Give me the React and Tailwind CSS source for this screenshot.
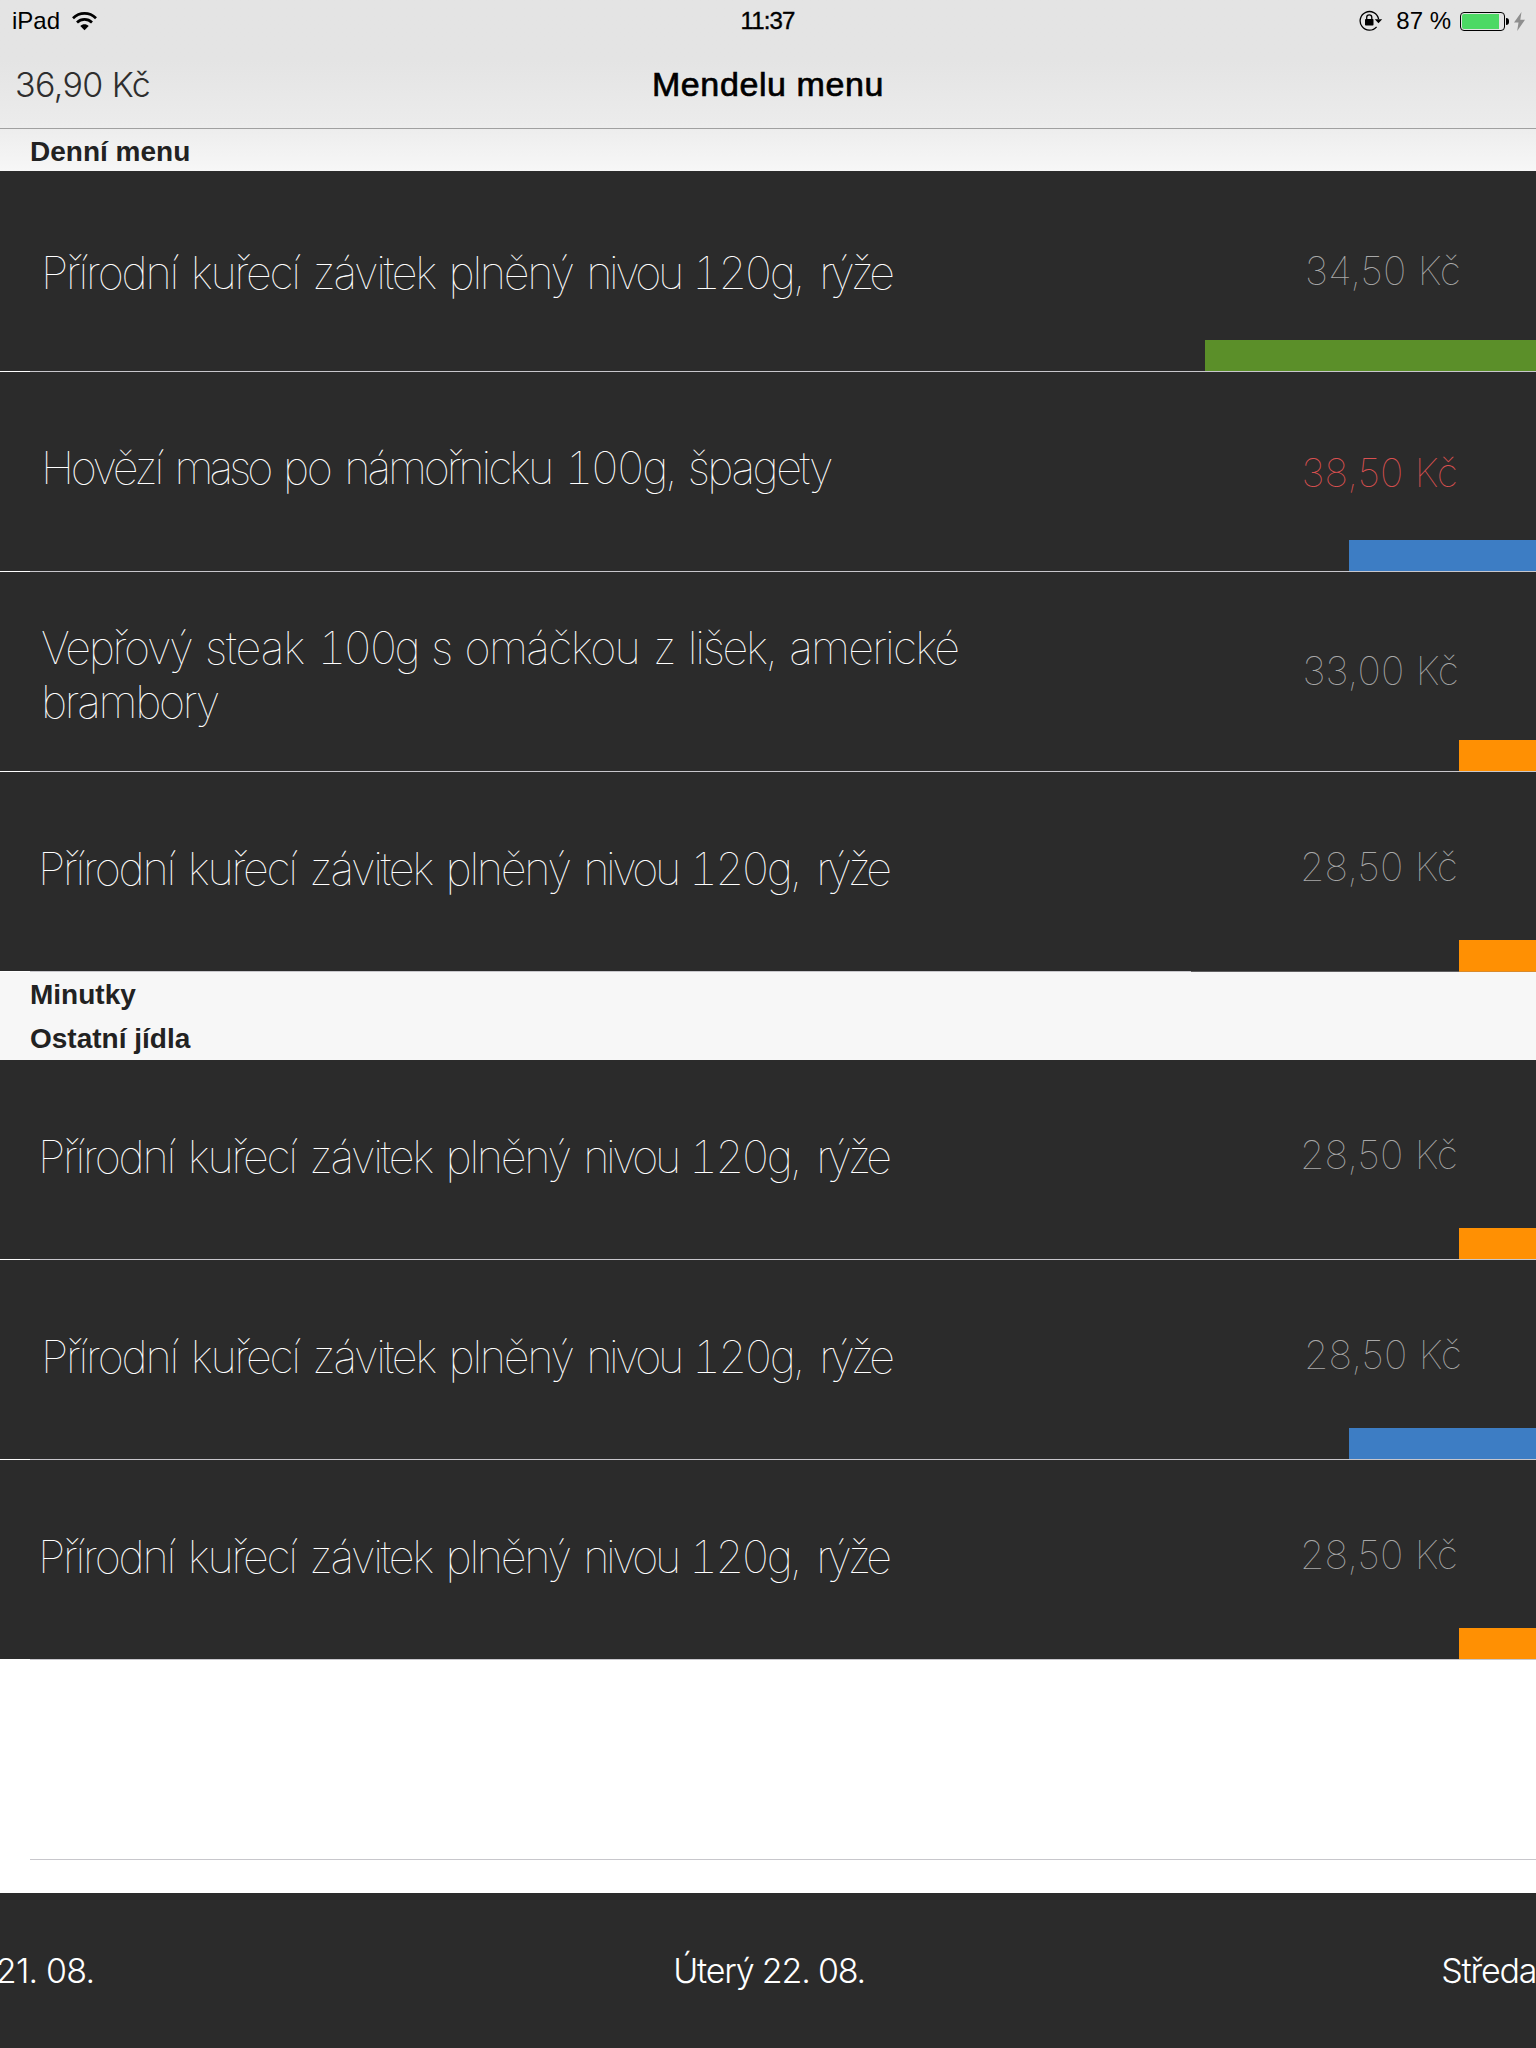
import React from "react";

const chicken = "Přírodní kuřecí závitek plněný nivou 120g, rýže";

const daily = [
  { name: chicken, price: "34,50 Kč", height: "h-[201px]", text: "pt-[75px] pl-[41px]", cost: "pt-[76px] pr-[75px] text-[#a8a8a8]", bar: "w-[331px] bg-[#5b8f29]" },
  { name: "Hovězí maso po námořnicku 100g, špagety", price: "38,50 Kč", text: "pt-[69px] pl-[41px]", cost: "pt-[77px] pr-[78px] text-[#d95050]", bar: "w-[187px] bg-[#3d7dc4]" },
  { name: "Vepřový steak 100g s omáčkou z lišek, americké brambory", price: "33,00 Kč", text: "pt-[49px] pl-[41px]", cost: "pt-[75px] pr-[77px] text-[#a8a8a8]", bar: "w-[77px] bg-[#ff9003]" },
  { name: chicken, price: "28,50 Kč", text: "pt-[70px] pl-[38px]", cost: "pt-[71px] pr-[78px] text-[#a8a8a8]", bar: "w-[77px] bg-[#ff9003]", partialLine: true },
];

const others = [
  { name: chicken, price: "28,50 Kč", text: "pt-[70px] pl-[38px]", cost: "pt-[71px] pr-[78px] text-[#a8a8a8]", bar: "w-[77px] bg-[#ff9003]" },
  { name: chicken, price: "28,50 Kč", text: "pt-[70px] pl-[41px]", cost: "pt-[71px] pr-[74px] text-[#a8a8a8]", bar: "w-[187px] bg-[#3d7dc4]" },
  { name: chicken, price: "28,50 Kč", text: "pt-[70px] pl-[38px]", cost: "pt-[71px] pr-[78px] text-[#a8a8a8]", bar: "w-[77px] bg-[#ff9003]" },
];

const tracking = {
  "Přírodní": "tracking-[-2.2px]",
  "nivou": "tracking-[-3.5px]",
  "rýže": "tracking-[-4.2px]",
  "Hovězí": "tracking-[-3.4px]",
  "maso": "tracking-[-4px]",
  "námořnicku": "tracking-[-3.1px]",
  "špagety": "tracking-[-2.5px]",
  "steak": "tracking-[-1.1px]",
  "omáčkou": "tracking-[-1.6px]",
  "americké": "tracking-[-1.8px]",
  "120g,": "-ml-[2px] mr-[4px] tracking-[-3.2px] tabular-nums",
  "100g,": "tracking-[-3.2px] tabular-nums",
  "100g": "tracking-[-3.4px] tabular-nums",
};

function DishName({ name }) {
  const words = name.split(" ");
  return words.map((word, i) => (
    <React.Fragment key={i}>
      <span className={tracking[word] ?? "tracking-[-2.3px]"}>{word}</span>
      {i < words.length - 1 ? " " : null}
    </React.Fragment>
  ));
}

function Row({ item }) {
  return (
    <div className={`relative flex shrink-0 justify-between bg-[#2b2b2b] ${item.height ?? "h-[200px]"}`}>
      <div className={`w-[1010px] text-[45px] leading-[54px] font-thin text-white [word-spacing:1px] ${item.text}`}>
        <DishName name={item.name} />
      </div>
      <div className={`text-[39.5px] leading-[48px] font-thin tracking-[0.1px] whitespace-nowrap ${item.cost}`}>{item.price}</div>
      <div className={`absolute right-0 bottom-0 h-8 ${item.bar}`} />
      <div className="absolute inset-x-0 bottom-0 flex h-px">
        <div className="w-[30px] bg-white" />
        {item.partialLine ? (
          <>
            <div className="w-[1161px] bg-[#c8c7cc]" />
            <div className="w-[268px] bg-[#5f5e60]" />
          </>
        ) : (
          <div className="flex-1 bg-[#c8c7cc]" />
        )}
        {item.partialLine ? <div className="flex-1 bg-[#d98a2c]" /> : null}
      </div>
    </div>
  );
}

function SectionTitle({ children }) {
  return (
    <h2 className="h-11 shrink-0 pl-[30px] font-['Liberation_Sans',sans-serif] text-[28px] leading-[46px] font-bold text-[#222]">{children}</h2>
  );
}

function WifiIcon() {
  return (
    <svg className="ml-3 h-[19px] w-[25px]" viewBox="0 0 25 19" fill="none" stroke="#000" strokeWidth="2.7">
      <path d="M1 6.200C7.500-.2 17.500-.2 24 6.200" />
      <path d="M5 10.400C9.200 6.400 15.800 6.400 20 10.400" />
      <path d="M12.500 18.300L8.300 13.900C10.600 11.700 14.400 11.700 16.700 13.900Z" fill="#000" stroke="none" />
    </svg>
  );
}

function RotationLockIcon() {
  return (
    <svg className="h-[22px] w-[24px]" viewBox="0 0 24 22" fill="none" stroke="#000" strokeWidth="1.3">
      <path d="M19.600 9.200A9.300 9.300 0 1 0 17.600 16.800" />
      <path d="M15.700 9.200H23.200L19.500 13.200Z" fill="#000" stroke="none" />
      <rect x="6" y="9" width="8.500" height="6.500" rx="0.800" fill="#000" stroke="none" />
      <path d="M7.700 9.500V7.500a2.550 2.550 0 0 1 5.100 0V9.500" />
    </svg>
  );
}

function Battery() {
  return (
    <div className="flex items-center">
      <div className="h-[19px] w-[45px] rounded-[4px] border border-black p-px">
        <div className="h-full w-[37px] rounded-l-[2px] bg-[#4cd964]" />
      </div>
      <div className="ml-px h-[7px] w-[3px] rounded-r-full bg-black" />
      <svg className="ml-[5px] h-[19px] w-[11px]" viewBox="0 0 11 19" fill="#8e8e8e">
        <path d="M7.500 0L0 10.500H4.500L3.200 19L11 7.800H6.300Z" />
      </svg>
    </div>
  );
}

export default function App() {
  return (
    <div className="flex h-[2048px] w-[1536px] flex-col overflow-hidden bg-white font-['Inter',sans-serif]">
      <div className="h-[171px] shrink-0 bg-linear-to-b from-[#e4e4e4] from-35% via-[#ebebeb] via-70% to-[#f7f7f7]">
        <header className="h-[129px] border-b border-[#a0a0a0]">
          <div className="grid h-[42px] grid-cols-3 items-center pr-[11px] pl-[12px] font-['Liberation_Sans',sans-serif] text-2xl leading-none text-black">
            <div className="flex items-center">
              <span>iPad</span>
              <WifiIcon />
            </div>
            <div className="pr-[2px] text-center tracking-[-0.9px] [-webkit-text-stroke:0.4px_black]">11:37</div>
            <div className="flex items-center justify-end">
              <RotationLockIcon />
              <span className="mr-[9px] ml-[13px]">87 %</span>
              <Battery />
            </div>
          </div>
          <div className="grid grid-cols-3 text-[34px]">
            <div className="pl-[15px] leading-[86px] font-light tracking-[-0.6px] text-[#2e2e2e]">36,90 Kč</div>
            <div className="text-center font-['Liberation_Sans',sans-serif] leading-[84px] tracking-[0.6px] text-black [-webkit-text-stroke:0.7px_black]">Mendelu menu</div>
          </div>
        </header>
        <SectionTitle>Denní menu</SectionTitle>
      </div>
      {daily.map((dish, i) => <Row key={i} item={dish} />)}
      <div className="shrink-0 bg-[#f7f7f7]">
        <SectionTitle>Minutky</SectionTitle>
        <SectionTitle>Ostatní jídla</SectionTitle>
      </div>
      {others.map((dish, i) => <Row key={i} item={dish} />)}
      <div className="ml-[30px] h-[200px] shrink-0 border-b border-[#c8c7cc]" />
      <footer className="mt-[33px] flex h-[155px] shrink-0 justify-center gap-[581px] bg-[#2b2b2b] pt-[53px] pr-1 text-[34px] leading-[50px] font-light tracking-[-1.2px] whitespace-nowrap text-white">
        <span className="-mr-[2px] w-[189px] text-right tracking-[-0.8px]">21. 08.</span>
        <span className="w-[187px]">Úterý 22. 08.</span>
        <span className="w-[187px]">Středa</span>
      </footer>
    </div>
  );
}
